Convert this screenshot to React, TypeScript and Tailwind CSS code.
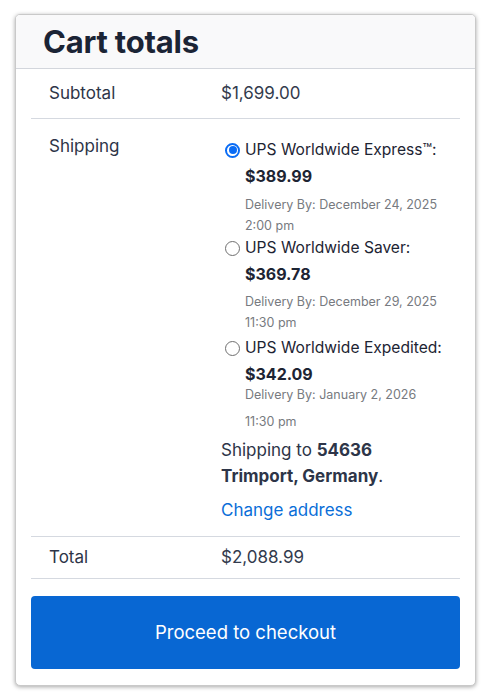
import React from "react";

function Radio({ checked }: { checked?: boolean }) {
  return checked ? (
    <span className="flex h-[15px] w-[15px] shrink-0 items-center justify-center rounded-full border-[2px] border-[#0a6cf5] bg-white">
      <span className="h-[8px] w-[8px] rounded-full bg-[#0a6cf5]" />
    </span>
  ) : (
    <span className="h-[15px] w-[15px] shrink-0 rounded-full border border-[#6f6f6f] bg-white" />
  );
}

export default function App() {
  return (
    <div className="min-h-[700px] bg-white pt-[14px] pl-[15px]" style={{ fontFamily: "Inter, 'Noto Sans', sans-serif" }}>
      <div className="w-[461px] overflow-hidden rounded-[5px] border border-[#c9c9c9] bg-white shadow-[0_1px_4px_rgba(0,0,0,0.35)]">
        <div className="flex h-[54px] items-center border-b border-[#d3d6dc] bg-[#f9f9fa] pl-[27px]">
          <h2 className="text-[31px] font-bold leading-none tracking-[-0.2px] text-[#1b2435]">Cart totals</h2>
        </div>
        <div className="px-[15px] pb-[16px]">
          <div className="flex h-[50px] items-center border-b border-[#d5d9e0] text-[17px] text-[#2d3548]">
            <div className="w-[190px] pl-[18px]">Subtotal</div>
            <div className="text-[#333b4d]">$1,699.00</div>
          </div>
          <div className="flex border-b border-[#d5d9e0] pb-[13px] pt-[14px] text-[17px] text-[#2d3548]">
            <div className="w-[190px] pl-[18px] leading-[26px]">Shipping</div>
            <div className="flex-1">
              <div className="mt-[5px] pl-[4px]">
                <div className="flex h-[24px] items-center gap-[5px] text-[15.6px] text-[#1d2433]">
                  <Radio checked />
                  <span>UPS Worldwide Express™:</span>
                </div>
                <div className="pl-[20px] text-[16px] font-bold leading-[28px] text-[#1d2433]">$389.99</div>
                <div className="mt-[4px] pl-[20px] text-[12.5px] leading-[21px] text-[#777a80]">
                  <div>Delivery By: December 24, 2025</div>
                  <div>2:00 pm</div>
                </div>
                <div className="flex h-[24px] items-center gap-[5px] text-[15.6px] text-[#1d2433]">
                  <Radio />
                  <span>UPS Worldwide Saver:</span>
                </div>
                <div className="pl-[20px] text-[16px] font-bold leading-[28px] text-[#1d2433]">$369.78</div>
                <div className="mt-[3px] pl-[20px] text-[12.5px] leading-[21px] text-[#777a80]">
                  <div>Delivery By: December 29, 2025</div>
                  <div>11:30 pm</div>
                </div>
                <div className="mt-[3px] flex h-[24px] items-center gap-[5px] text-[15.6px] text-[#1d2433]">
                  <Radio />
                  <span>UPS Worldwide Expedited:</span>
                </div>
                <div className="pl-[20px] text-[16px] font-bold leading-[28px] text-[#1d2433]">$342.09</div>
                <div className="mt-[-4px] pl-[20px] text-[12.5px] leading-[21px] text-[#777a80]">
                  <div>Delivery By: January 2, 2026</div>
                  <div className="mt-[6px]">11:30 pm</div>
                </div>
              </div>
              <div className="mt-[5px] leading-[26px] text-[#2d3548]">
                Shipping to <strong className="font-bold">54636</strong>
                <br />
                <strong className="font-bold">Trimport, Germany</strong>.
              </div>
              <div className="mt-[8px] leading-[26px] text-[#0a6ed8]">Change address</div>
            </div>
          </div>
          <div className="flex h-[42px] items-center border-b border-[#d5d9e0] text-[17px] text-[#2d3548]">
            <div className="w-[190px] pl-[18px]">Total</div>
            <div className="text-[#333b4d]">$2,088.99</div>
          </div>
          <button className="mt-[17px] flex h-[73px] w-full items-center justify-center rounded-[4px] bg-[#0867d3] text-[18.5px] text-white">
            Proceed to checkout
          </button>
        </div>
      </div>
    </div>
  );
}
